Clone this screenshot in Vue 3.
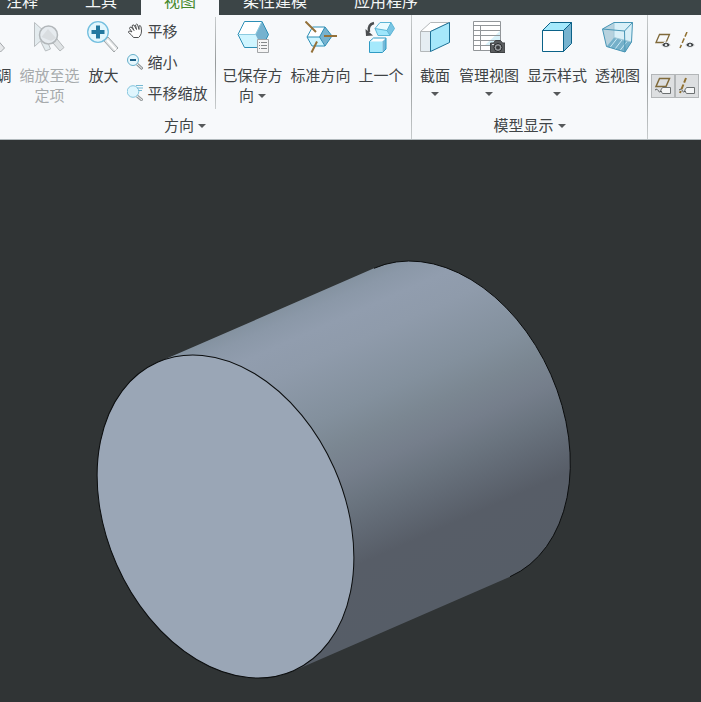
<template>
  <div class="app">
    <nav class="tabs">
      <button
        v-for="tab in tabs"
        :key="tab"
        type="button"
        :class="['tab', { active: tab === activeTab }]"
        @click="activeTab = tab"
      >
        {{ tab }}
      </button>
    </nav>

    <div class="ribbon">
      <!-- Orientation -->
      <section class="group orientation">
        <div class="items">
          <button type="button" class="tool">
            <svg class="icon" viewBox="0 0 32 32">
              <circle cx="11" cy="11" r="10" fill="#e4f4fb" stroke="#7fb9d4" />
              <path d="M18 20l4-4 9.500 11-4 4z" fill="#e6e8ea" stroke="#a3a7aa" />
            </svg>
            <span>重新调</span>
          </button>
          <button type="button" class="tool" disabled>
            <svg class="icon" viewBox="0 0 32 32">
              <path d="M1.500 1.500v24l6-5.500 5 10 5-2-4-10h6z" fill="#e3ebee" stroke="#b9bec1" />
              <path d="M20 22l4-4 7 8.500-4 3.500z" fill="#dfe3e5" stroke="#b5b9bb" />
              <circle cx="15.500" cy="14" r="9" fill="#e6ebef" stroke="#b2b7ba" stroke-width="1.500" />
              <path d="M8.500 16l6.500-8 8 9-5 3z" fill="#d9dde0" />
            </svg>
            <span>缩放至选<br />定项</span>
          </button>
          <button type="button" class="tool">
            <svg class="icon" viewBox="0 0 32 32">
              <path d="M17 20l4-4 10 11-4 4z" fill="#e0e3e4" stroke="#a0a5a7" />
              <path d="M20 19l9 10" stroke="#fff" stroke-width="2" />
              <circle cx="11" cy="11" r="10.300" fill="#e2f6fd" stroke="#73bfdf" stroke-width="1.300" />
              <path d="M4.500 11h13M11 4.500v13" stroke="#23789f" stroke-width="4" />
            </svg>
            <span>放大</span>
          </button>
          <div class="list">
            <button type="button" class="row">
              <svg class="small-icon" viewBox="0 0 16 16">
                <path
                  d="M6.500 14.500L4 11.500 1.500 9.500Q1 8 3 8L5 9 2.500 5.500Q2.500 4 4 4L7 7.500 5 3Q5.500 1.500 7 2L9.500 6.500 8.500 2Q9.500.5 10.500 1.500L12 6.500 12 3Q13 2 14 3.500L14.500 8Q14.500 11 13 13L11.500 14.500z"
                  fill="#fff"
                  stroke="#505253"
                />
              </svg>
              平移
            </button>
            <button type="button" class="row">
              <svg class="small-icon" viewBox="0 0 16 16">
                <path d="M10 10l5.500 5" stroke="#8f9496" stroke-width="3" />
                <path d="M10 10l5 4.500" stroke="#f1f2f2" />
                <circle cx="6" cy="6" r="5.500" fill="#e6f7fd" stroke="#65aeca" />
                <path d="M3 6h6" stroke="#1b5f86" stroke-width="2" />
              </svg>
              缩小
            </button>
            <button type="button" class="row">
              <svg class="small-icon" viewBox="0 0 16 16">
                <path d="M10 11l5.500 4.500" stroke="#969b9d" stroke-width="3" />
                <path d="M10 11l5 4" stroke="#f1f2f2" />
                <circle cx="6" cy="6.500" r="5.800" fill="#dff6fe" stroke="#83c4dd" />
                <path d="M9 .5h7M10 3h6M11.500 5.500h3.500" stroke="#75b9d3" />
              </svg>
              平移缩放
            </button>
          </div>
          <div class="divider"></div>
          <button type="button" class="tool">
            <svg class="icon" viewBox="0 0 32 32">
              <path d="M1 13.500L7.500.5H25l-6.500 13z" fill="#fff" />
              <path d="M1 13.500h17.500l6.500 13H7.500z" fill="#cff5ff" />
              <path d="M25 .5l6.500 13-6.500 13-6.500-13z" fill="#76b2cf" />
              <path
                d="M1 13.500L7.500.5H25l6.500 13-6.500 13H7.500z"
                fill="none"
                stroke="#2d8eb5"
              />
              <path d="M1 13.500h17.500L25 .5" fill="none" stroke="#8ccbe0" />
              <path d="M20.500 18.500h11v13h-11z" fill="#f5f5f5" stroke="#a2a5a7" />
              <path d="M22 21.500h1M22 24.500h1M22 27.500h1M24 21.500h6M24 24.500h6M24 27.500h6" stroke="#85898b" />
            </svg>
            <span>已保存方<br />向<i class="arrow inline"></i></span>
          </button>
          <button type="button" class="tool">
            <svg class="icon" viewBox="0 0 32 32">
              <path d="M2 16L7.500 6H20l-5.500 10z" fill="#fff" />
              <path d="M2 16h12.500l5.500 9H7z" fill="#cff5ff" />
              <path d="M20 6l7 9-7 10-5.500-9z" fill="#76b2cf" />
              <path d="M2 16L7.500 6H20l7 9-7 10H7zH14.500L20 6M14.500 16l5.500 9" fill="none" stroke="#2d8eb5" />
              <path d="M.5.5L11 11M19 15h13M12 20.500L6.500 31.500" fill="none" stroke="#947139" stroke-width="2" />
            </svg>
            <span>标准方向</span>
          </button>
          <button type="button" class="tool">
            <svg class="icon" viewBox="0 0 32 32">
              <path d="M10 7.500L15 1.500h11l-4 8z" fill="#e9fbff" />
              <path d="M10 7.500l12 2 3 5H13z" fill="#9fe6fb" />
              <path d="M26 1.500l3.500 6-4.500 7-3-5z" fill="#79c5e4" />
              <path
                d="M10 7.500L15 1.500h11l3.500 6-4.500 7H13zL22 9.500l4-8M22 9.500l3 5"
                fill="none"
                stroke="#5cb6d6"
              />
              <path d="M4.500 20.500l4-3.500H21l-3.500 3.500z" fill="#fff" />
              <path d="M4.500 20.500h13v11h-13z" fill="#a5e9fc" />
              <path d="M17.500 20.500L21 17v11l-3.500 3.500z" fill="#72b9d8" />
              <path
                d="M4.500 20.500l4-3.500H21v11l-3.500 3.500h-13z"
                fill="none"
                stroke="#2f9bc4"
              />
              <path d="M9 2Q2.500 3.500 4 11" fill="none" stroke="#4b4e50" stroke-width="2.500" />
              <path d="M.5 8l.5 7 7-.5z" fill="#4b4e50" />
            </svg>
            <span>上一个</span>
          </button>
        </div>
        <button type="button" class="group-label">方向<i class="arrow inline"></i></button>
      </section>

      <!-- Model display -->
      <section class="group display">
        <div class="items">
          <button type="button" class="tool">
            <svg class="icon" viewBox="0 0 32 32">
              <path d="M1.500 10.500l10-9h19l-19 9z" fill="#fff" stroke="#b4b8ba" />
              <path d="M1.500 10.500h10v20h-10z" fill="#e5edf2" stroke="#b4b8ba" />
              <path d="M11.500 10.500l19-9v20l-19 9z" fill="#a6e8fb" stroke="#1d7197" />
            </svg>
            <span>截面</span>
            <i class="arrow"></i>
          </button>
          <button type="button" class="tool">
            <svg class="icon" viewBox="0 0 32 32">
              <path d="M.5.5h27v29H.5z" fill="#fff" />
              <path d="M27 10v15H11z" fill="#d8f1f9" />
              <path
                d="M.5.5h27v29H.5zM.5 4.500h27M.5 9.500h27M.5 14.500h27M.5 19.500h27M.5 24.500h27M7.500 4.500v25"
                fill="none"
                stroke="#929699"
              />
              <path d="M17.500 22h3l2-2.500h5l2 2.500h2.500v9.500H17.500z" fill="#5b5e60" stroke="#3e4143" />
              <circle cx="25" cy="26.500" r="4" fill="#9a9ea1" stroke="#242628" />
              <circle cx="25" cy="26.500" r="2" fill="#3a3c3e" />
              <path d="M19 23.500h2" stroke="#e1e2e3" />
            </svg>
            <span>管理视图</span>
            <i class="arrow"></i>
          </button>
          <button type="button" class="tool">
            <svg class="icon" viewBox="0 0 32 32">
              <g stroke="#0b6288">
                <path d="M1.500 9.500l8-8h21l-8 8z" fill="#a5e9fc" />
                <path d="M1.500 9.500h21v21h-21z" fill="#fff" />
                <path d="M22.500 9.500l8-8v21l-8 8z" fill="#77b3cf" />
              </g>
            </svg>
            <span>显示样式</span>
            <i class="arrow"></i>
          </button>
          <button type="button" class="tool">
            <svg class="icon" viewBox="0 0 32 32">
              <path d="M.5 8L12 1.500h18.500L29.500 21 23 31 4.500 25.500z" fill="#d9f0f8" />
              <path d="M.5 8L12 1.500v15L4.500 25.500z" fill="#b7d2de" />
              <path d="M12 16.500l17.500 4.500L23 31 4.500 25.500z" fill="#75b0c9" />
              <path d="M8 26.500l7-9M13 28l7-9M18 29.500l7-9" stroke="#c9eaf6" />
              <path d="M12 1.500v15l17.500 4.500" fill="none" stroke="#a2c9d9" />
              <path
                d="M.5 8L12 1.500h18.500L29.500 21 23 31 4.500 25.500zL22.500 10l8-8.500M22.500 10L23 31"
                fill="none"
                stroke="#4695b5"
              />
            </svg>
            <span>透视图</span>
          </button>
        </div>
        <button type="button" class="group-label">模型显示<i class="arrow inline"></i></button>
      </section>

      <!-- Datum toggles -->
      <section class="toggles">
        <button type="button" class="toggle" aria-label="平面显示">
          <svg class="toggle-icon" viewBox="0 0 18 18">
            <path d="M2 10.500L5.500 2.500h10l-3.500 8z" fill="none" stroke="#806a3a" stroke-width="1.300" />
            <path d="M7.500 13Q12 7 16.500 13 12 18 7.500 13z" fill="#3f4345" stroke="#f7f9fb" />
            <circle cx="12" cy="13" r="1.300" fill="#dfe3e5" />
          </svg>
        </button>
        <button type="button" class="toggle" aria-label="轴显示">
          <svg class="toggle-icon" viewBox="0 0 18 18">
            <path d="M9 0L2 16" stroke="#917132" stroke-width="1.500" stroke-dasharray="5 2" />
            <path d="M7.500 13Q12 7 16.500 13 12 18 7.500 13z" fill="#3f4345" stroke="#f7f9fb" />
            <circle cx="12" cy="13" r="1.300" fill="#dfe3e5" />
          </svg>
        </button>
        <button type="button" class="toggle pressed" aria-label="平面标记显示">
          <svg class="toggle-icon" viewBox="0 0 18 18">
            <path d="M2 9.500L5.500 1.500h10l-3.500 8z" fill="none" stroke="#806a3a" stroke-width="1.500" />
            <path d="M8.500 10.500h8v6h-8l-2-3z" fill="#f5f6f7" stroke="#6d7172" />
            <path d="M1 13q2-2 3 .5t4 .5" fill="none" stroke="#55595a" />
          </svg>
        </button>
        <button type="button" class="toggle pressed" aria-label="轴标记显示">
          <svg class="toggle-icon" viewBox="0 0 18 18">
            <path d="M8 1L2 16" stroke="#917132" stroke-width="2" stroke-dasharray="5 2" />
            <path d="M8.500 10.500h8v6h-8l-2-3z" fill="#f5f6f7" stroke="#6d7172" />
            <path d="M1 13q2-2 3 .5t4 .5" fill="none" stroke="#55595a" />
          </svg>
        </button>
      </section>
    </div>

    <main class="viewport">
      <svg class="model" viewBox="0 140 701 562">
        <defs>
          <linearGradient id="shade" gradientUnits="userSpaceOnUse" x1="158" y1="362.300" x2="294" y2="670.700">
            <stop offset="0" stop-color="#8492a0" />
            <stop offset=".04" stop-color="#8b98a8" />
            <stop offset=".1" stop-color="#919dae" />
            <stop offset=".18" stop-color="#8f9bab" />
            <stop offset=".35" stop-color="#83909d" />
            <stop offset=".44" stop-color="#7b8792" />
            <stop offset=".53" stop-color="#757e8b" />
            <stop offset=".61" stop-color="#6b7580" />
            <stop offset=".7" stop-color="#616974" />
            <stop offset=".79" stop-color="#575d67" />
            <stop offset="1" stop-color="#565d67" />
          </linearGradient>
        </defs>
        <path
          d="M158 362.300L374 268.300A168.500 119 66.200 0 1 510 576.700L294 670.700z"
          fill="url(#shade)"
        />
        <path
          d="M374 268.300A168.500 119 66.200 0 1 510 576.700"
          fill="none"
          stroke="#0b0d0e"
        />
        <ellipse
          cx="225.500"
          cy="516.500"
          rx="119"
          ry="168.500"
          transform="rotate(-23.8 225.500 516.500)"
          fill="#9aa6b6"
          stroke="#0b0d0e"
        />
      </svg>
    </main>
  </div>
</template>

<script setup>
import { ref } from "vue"

const tabs = ["注释", "工具", "视图", "柔性建模", "应用程序"]
const activeTab = ref("视图")
</script>

<style>
body {
  background: #303435;
}
</style>

<style scoped>
.app {
  min-height: 100vh;
  display: flex;
  flex-direction: column;
  overflow: hidden;
  background: #303435;
  color: #404446;
  font-family: "Noto Sans CJK SC", sans-serif;
  font-size: 15px;
  line-height: 20px;
}

button {
  padding: 0;
  border: none;
  background: none;
  color: inherit;
  font: inherit;
  white-space: nowrap;
  cursor: pointer;
}

.tabs {
  display: flex;
  align-items: flex-end;
  gap: 1px;
  height: 15px;
  padding-right: 1px;
  margin-left: -17px;
  overflow: hidden;
  background: #3c4547;
}

.tab {
  flex-shrink: 0;
  height: 27px;
  padding: 0 23px 3px;
  color: #f4f6f6;
  font-size: 16px;
  line-height: 24px;
}

.tab.active {
  background: #f7f9fb;
  color: #46892b;
}

.ribbon {
  display: flex;
  height: 124px;
  overflow: hidden;
  background: #f7f9fb;
  border-bottom: 1px solid #b2babd;
}

.group {
  flex-shrink: 0;
  display: flex;
  flex-direction: column;
  align-items: center;
  border-right: 1px solid;
  border-image: linear-gradient(#c8cccd, #969a9b 50%, #c8cccd) 1;
}

.orientation {
  width: 452px;
  margin-left: -41px;
}

.display {
  width: 235px;
}

.items {
  display: flex;
  height: 100px;
}

.tool {
  display: flex;
  flex-direction: column;
  align-items: center;
  padding: 6px 4px 0;
}

.tool:disabled {
  color: #a7abad;
}

.icon {
  width: 32px;
  height: 32px;
  margin-bottom: 12px;
}

.arrow {
  width: 0;
  height: 0;
  margin-top: 7px;
  border: 4px solid transparent;
  border-top-color: #56595b;
  border-bottom: none;
}

.arrow.inline {
  display: inline-block;
  margin: 0 0 3px 4px;
}

.list {
  display: flex;
  flex-direction: column;
  gap: 1px;
  padding: 1px 7px 0 4px;
}

.row {
  display: flex;
  align-items: center;
  gap: 4px;
  height: 30px;
}

.small-icon {
  width: 16px;
  height: 16px;
}

.divider {
  width: 1px;
  height: 92px;
  margin: 2px 3px 0 0;
  background: linear-gradient(#c8cccd, #969a9b 50%, #c8cccd);
}

.toggles {
  display: grid;
  grid-template-columns: 24px 24px;
  grid-auto-rows: 24px;
  row-gap: 21px;
  align-content: start;
  padding: 14px 3px 0;
}

.toggle {
  display: flex;
  align-items: center;
  justify-content: center;
}

.toggle.pressed {
  background: #dddfe1;
  border: 1px solid #b3b6b8;
}

.toggle-icon {
  width: 18px;
  height: 18px;
}

.viewport {
  flex: 1;
}

.model {
  display: block;
  width: 100%;
}
</style>
